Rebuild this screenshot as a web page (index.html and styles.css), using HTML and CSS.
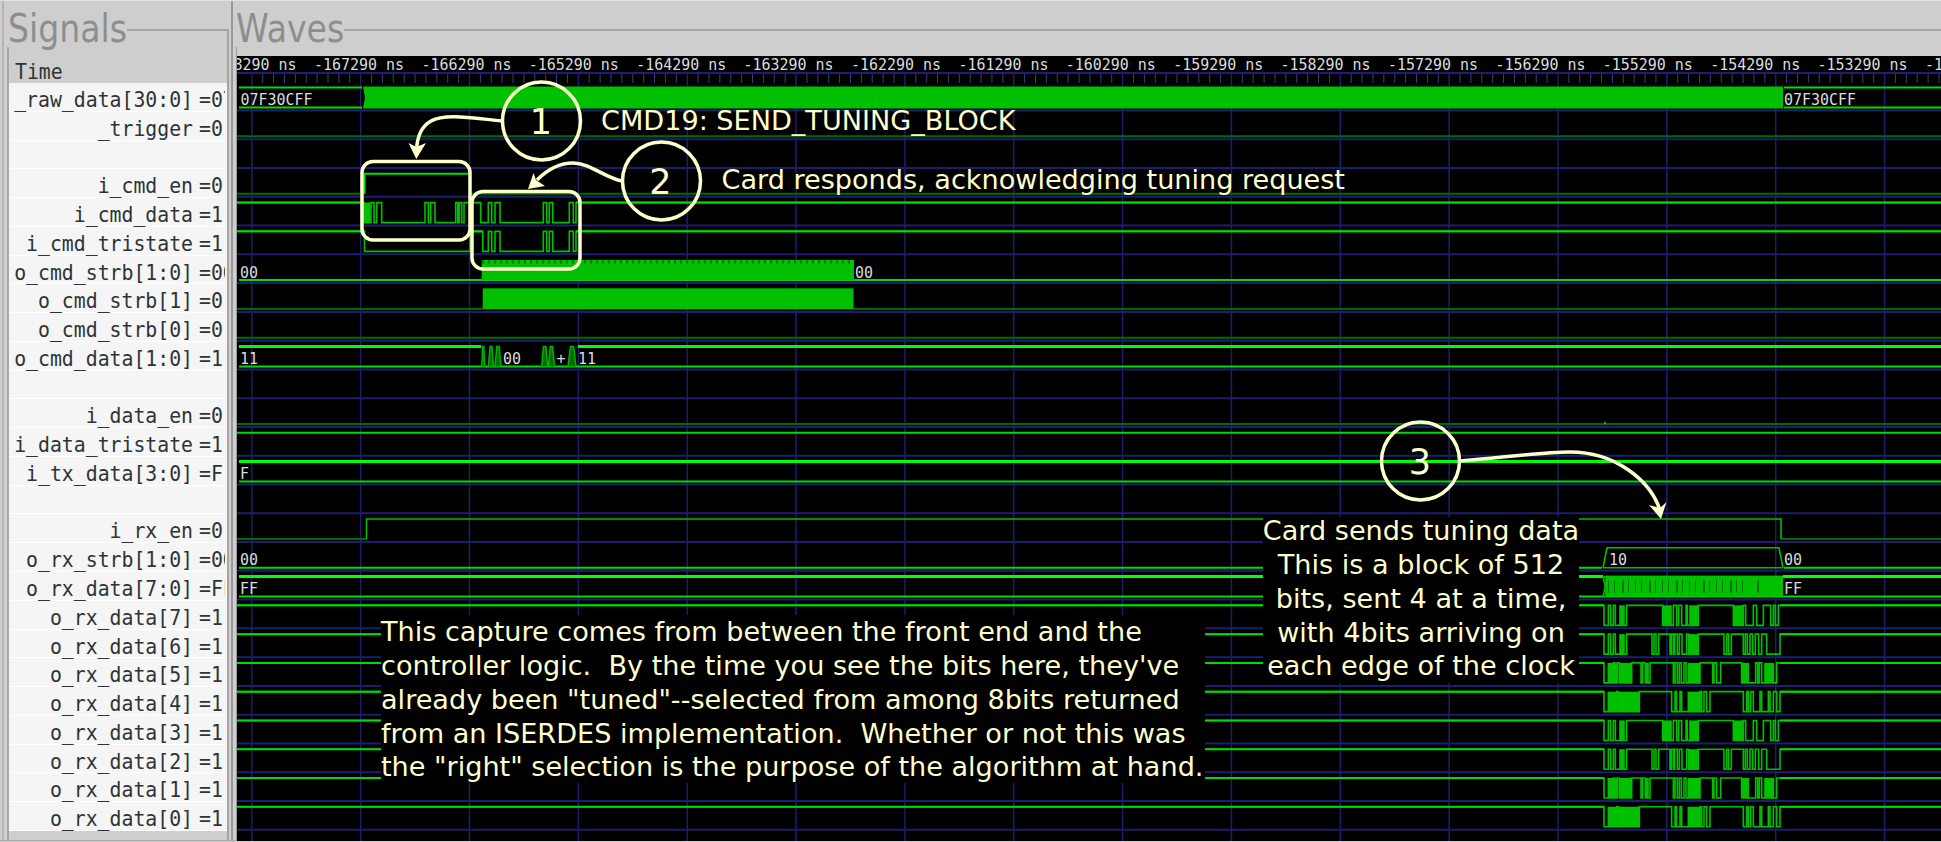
FILE: index.html
```html
<!DOCTYPE html>
<html lang="en">
<head>
    <meta charset="UTF-8">
    <title>Signals and Waves</title>
    <link rel="stylesheet" href="styles.css">
</head>
<body>
    <div class="app">
        <div class="pane pane-signals">
            <div class="frame-head">
                <h2 class="frame-title">Signals</h2>
                <div class="frame-rule"></div>
            </div>
            <div class="frame-body signal-list">
                <div class="time-row"><span class="time-label">Time</span></div>
                <div class="row"><span class="name">_raw_data[30:0]</span><span class="val">=07</span></div>
                <div class="row"><span class="name">_trigger</span><span class="val">=0</span></div>
                <div class="row"></div>
                <div class="row"><span class="name">i_cmd_en</span><span class="val">=0</span></div>
                <div class="row"><span class="name">i_cmd_data</span><span class="val">=1</span></div>
                <div class="row"><span class="name">i_cmd_tristate</span><span class="val">=1</span></div>
                <div class="row"><span class="name">o_cmd_strb[1:0]</span><span class="val">=00</span></div>
                <div class="row"><span class="name">o_cmd_strb[1]</span><span class="val">=0</span></div>
                <div class="row"><span class="name">o_cmd_strb[0]</span><span class="val">=0</span></div>
                <div class="row"><span class="name">o_cmd_data[1:0]</span><span class="val">=11</span></div>
                <div class="row"></div>
                <div class="row"><span class="name">i_data_en</span><span class="val">=0</span></div>
                <div class="row"><span class="name">i_data_tristate</span><span class="val">=1</span></div>
                <div class="row"><span class="name">i_tx_data[3:0]</span><span class="val">=F</span></div>
                <div class="row"></div>
                <div class="row"><span class="name">i_rx_en</span><span class="val">=0</span></div>
                <div class="row"><span class="name">o_rx_strb[1:0]</span><span class="val">=00</span></div>
                <div class="row"><span class="name">o_rx_data[7:0]</span><span class="val">=FF</span></div>
                <div class="row"><span class="name">o_rx_data[7]</span><span class="val">=1</span></div>
                <div class="row"><span class="name">o_rx_data[6]</span><span class="val">=1</span></div>
                <div class="row"><span class="name">o_rx_data[5]</span><span class="val">=1</span></div>
                <div class="row"><span class="name">o_rx_data[4]</span><span class="val">=1</span></div>
                <div class="row"><span class="name">o_rx_data[3]</span><span class="val">=1</span></div>
                <div class="row"><span class="name">o_rx_data[2]</span><span class="val">=1</span></div>
                <div class="row"><span class="name">o_rx_data[1]</span><span class="val">=1</span></div>
                <div class="row"><span class="name">o_rx_data[0]</span><span class="val">=1</span></div>
            </div>
        </div>

        <div class="pane pane-waves">
            <div class="frame-head">
                <h2 class="frame-title">Waves</h2>
                <div class="frame-rule"></div>
            </div>
            <div class="frame-body">
                <svg class="wave-canvas" viewBox="237 56 1704 785" width="1704" height="785">
                    <g id="grid"></g>
                    <g id="traces"></g>

                    <!-- notes drawn over the capture -->
                    <rect class="note-bg" x="381" y="615" width="824" height="168"/>
                    <rect class="note-bg" x="1263" y="517" width="316" height="166"/>

                    <circle class="note-line" cx="541.5" cy="121" r="39"/>
                    <circle class="note-line" cx="661.5" cy="181" r="39"/>
                    <circle class="note-line" cx="1420.5" cy="461" r="39"/>
                    <rect class="note-line" x="362" y="161.5" width="108" height="78.5" rx="11"/>
                    <rect class="note-line" x="472" y="191.5" width="108" height="77.5" rx="11"/>

                    <path class="note-line" d="M502 121 C472 118 445 113 431 121 C420 127 417 140 416.5 150"/>
                    <polygon class="note-fill" points="416.3,159 408.5,143 416.3,147 426,143"/>
                    <path class="note-line" d="M622 181 C605 178 590 163 573 163 C557 163 545 172 537 180"/>
                    <polygon class="note-fill" points="528,189 533.5,173 536,180 545,186"/>
                    <path class="note-line" d="M1460 461 C1500 458 1540 452 1570 452 C1615 452 1650 480 1660 510"/>
                    <polygon class="note-fill" points="1661,519 1649,505 1660,508 1666.5,502"/>

                    <text class="note-num" x="541" y="134">1</text>
                    <text class="note-num" x="660.5" y="194">2</text>
                    <text class="note-num" x="1420" y="474">3</text>

                    <text class="note-text" x="601" y="130">CMD19: SEND_TUNING_BLOCK</text>
                    <text class="note-text" x="721.5" y="189">Card responds, acknowledging tuning request</text>

                    <text class="note-text" x="381" y="641">This capture comes from between the front end and the</text>
                    <text class="note-text" x="381" y="675">controller logic.  By the time you see the bits here, they've</text>
                    <text class="note-text" x="381" y="709">already been "tuned"--selected from among 8bits returned</text>
                    <text class="note-text" x="381" y="743">from an ISERDES implementation.  Whether or not this was</text>
                    <text class="note-text" x="381" y="776">the "right" selection is the purpose of the algorithm at hand.</text>

                    <text class="note-text note-center" x="1421" y="540">Card sends tuning data</text>
                    <text class="note-text note-center" x="1421" y="574">This is a block of 512</text>
                    <text class="note-text note-center" x="1421" y="608">bits, sent 4 at a time,</text>
                    <text class="note-text note-center" x="1421" y="642">with 4bits arriving on</text>
                    <text class="note-text note-center" x="1421" y="675">each edge of the clock</text>
                </svg>
            </div>
        </div>
    </div>

    <script src="waves.js"></script>
</body>
</html>
```

FILE: styles.css
```css
html, body {
    margin: 0;
    height: 100%;
    overflow: hidden;
}
body {
    background-color: #cecece;
    font-family: "DejaVu Sans", sans-serif;
}
.app {
    display: flex;
    height: 841px;
    border-top: 1px solid #e2e2e2;
    border-bottom: 1px solid #a8a8a8;
    box-sizing: border-box;
}
.pane {
    display: flex;
    flex-direction: column;
}
.pane-signals {
    width: 231px;
    box-sizing: border-box;
    margin-left: 2px;
    padding-left: 3px;
    padding-right: 2px;
    border-left: 2px solid #b6b6b6;
    border-right: 2px solid #989898;
}
.pane-waves {
    flex: 1;
    min-width: 0;
    padding-left: 3px;
}
.frame-head {
    display: flex;
    height: 46px;
}
.frame-title {
    margin: 0;
    padding-top: 5px;
    font-size: 39px;
    font-weight: normal;
    line-height: 46px;
    color: #8e8e8e;
    transform: scaleX(0.85);
    transform-origin: left;
}
.pane-signals .frame-title {
    width: 119px;
    margin-left: 1px;
}
.pane-waves .frame-title {
    width: 108px;
}
.frame-rule {
    flex: 1;
    height: 18px;
    margin-top: 28px;
    border-top: 2px solid #a4a4a4;
}
.pane-signals .frame-rule {
    border-right: 2px solid #a4a4a4;
}
.frame-body {
    flex: 1;
    min-height: 0;
    padding-top: 9px;
}
.pane-signals .frame-body {
    padding-top: 6px;
    border-left: 2px solid #a8a8a8;
    border-right: 2px solid #a4a4a4;
}
.pane-waves .frame-body {
    border-left: 1px solid #9a9a9a;
}

/* signal names */
.signal-list {
    background-color: #cecece;
    color: #2e3436;
    font-family: "DejaVu Sans Mono", monospace;
    font-size: 22px;
}
.time-row {
    height: 30px;
    line-height: 38px;
    padding-left: 6px;
}
.time-label {
    display: inline-block;
    transform: scaleX(0.9);
    transform-origin: left;
}
.row {
    display: flex;
    box-sizing: border-box;
    height: 28.77px;
    padding-top: 4px;
    line-height: 26px;
    background-color: #f5f5f5;
    border-bottom: 1.5px solid #ffffff;
}
.name {
    flex: none;
    display: flex;
    justify-content: flex-end;
    width: 184px;
    white-space: nowrap;
    transform: scaleX(0.9);
    transform-origin: right;
}
.val {
    flex: none;
    width: 29px;
    margin-left: 6px;
    overflow: hidden;
    white-space: nowrap;
    transform: scaleX(0.9);
    transform-origin: left;
}

/* wave window */
.wave-canvas {
    display: block;
    background-color: #000000;
}
.grid-line {
    stroke: #1d1d72;
    stroke-width: 1.5;
}
.grid-row {
    stroke: #1d1d72;
    stroke-width: 2;
}
.grid-tick {
    stroke: #3a3a8c;
    stroke-width: 1;
}
.time-text, .bus-text {
    font-family: "DejaVu Sans Mono", monospace;
    font-size: 16.5px;
    fill: #dcdcdc;
}
.trace {
    fill: none;
    stroke-width: 2;
}
.trace-low {
    stroke: #006c00;
}
.trace-high {
    stroke: #00dc00;
}
.trace-edge {
    stroke: #00c000;
    stroke-width: 1.6;
}
.trace-bus {
    stroke: #00ff00;
    stroke-width: 3;
}
.trace-cross {
    fill: #006c00;
    stroke: #00b000;
    stroke-width: 1.5;
}
.trace-solid {
    fill: #00c000;
}
.trace-teeth {
    fill: none;
    stroke: #007400;
    stroke-width: 3;
    stroke-dasharray: 2 4;
}
.trace-fuzz {
    fill: none;
    stroke: #007000;
    stroke-width: 12;
    stroke-dasharray: 1 5 1 7 2 4 1 6;
}
.trace-fuzz-sparse {
    stroke-dasharray: 1 14 2 22;
}

/* notes */
.note-bg {
    fill: #000000;
}
.note-line {
    fill: none;
    stroke: #ffffcc;
    stroke-width: 3.5;
}
.note-fill {
    fill: #ffffcc;
}
.note-num {
    font-size: 35px;
    fill: #ffffcc;
    text-anchor: middle;
}
.note-text {
    font-size: 27.1px;
    fill: #ffffcc;
    white-space: pre;
}
.note-center {
    text-anchor: middle;
}
```

FILE: waves.js
```js
const ROW = 28.77;
const RIGHT = 1941;

function rowBottom(k) { return 110.5 + ROW * k; }
function highY(k) { return rowBottom(k) - 23; }
function lowY(k) { return rowBottom(k) - 3; }

function line(x1, y1, x2, y2, cls) {
    return `<line class="${cls}" x1="${x1}" y1="${y1}" x2="${x2}" y2="${y2}"/>`;
}

function text(x, y, str, width, cls) {
    return `<text class="${cls}" x="${x}" y="${y}" textLength="${width}" lengthAdjust="spacingAndGlyphs">${str}</text>`;
}

function busLabel(k, x, str) {
    return text(x, rowBottom(k) - 5.5, str, str.length * 9, 'bus-text');
}

function constLow(k, from = 237, to = RIGHT) {
    return line(from, lowY(k), to, lowY(k), 'trace trace-low');
}

function constHigh(k, from = 237, to = RIGHT) {
    return line(from, highY(k), to, highY(k), 'trace trace-high');
}

// a bit that idles high and dips low on the given [start, end] spans
function bitRow(k, from, to, lows, fills) {
    const hi = highY(k);
    const lo = lowY(k);
    let d = `M${from} ${hi}`;
    lows.concat(fills).sort((a, b) => a[0] - b[0]).forEach(([a, b]) => {
        d += `H${a}V${lo}H${b}V${hi}`;
    });
    d += `H${to}`;
    let out = '';
    fills.forEach(([a, b]) => {
        out += `<rect class="trace-solid" x="${a}" y="${hi}" width="${b - a}" height="${lo - hi}"/>`;
    });
    return out + `<path class="trace trace-edge" d="${d}"/>` + constHigh(k, from, lows.concat(fills).reduce((m, s) => Math.min(m, s[0]), to));
}

// the rx rows were read off at 3x from x = 1580
function rxSpans(list) {
    return list.map(([a, b]) => [1580 + a / 3, 1580 + b / 3]);
}

function drawGrid() {
    let out = '';
    for (let k = 0; k < 26; k++) {
        out += line(237, rowBottom(k), RIGHT, rowBottom(k), 'grid-row');
    }
    for (let i = 0; i < 17; i++) {
        const x = 251.8 + 108.85 * i;
        out += line(x, 73, x, 841, 'grid-line');
        for (let t = 1; t < 10; t++) {
            const tx = x + 10.885 * t;
            out += line(tx, 73, tx, 83, 'grid-tick');
        }
    }
    out += line(237, 73, RIGHT, 73, 'grid-row');
    for (let i = 0; i < 17; i++) {
        const mid = 251.6 + 107.4 * i;
        out += text(mid - 45, 70, `-${168290 - i * 1000} ns`, 90, 'time-text');
    }
    return out;
}

function drawBusses() {
    let out = '';

    // _raw_data
    out += line(239, highY(0), 362, highY(0), 'trace trace-high');
    out += line(239, lowY(0), 362, lowY(0), 'trace trace-high');
    out += `<path class="trace-solid" d="M363 ${highY(0) - 1}H1783V${lowY(0) + 1}H363L365 ${rowBottom(0) - 13}Z"/>`;
    out += busLabel(0, 240.5, '07F30CFF');
    out += line(1784, highY(0), RIGHT, highY(0), 'trace trace-high');
    out += line(1784, lowY(0), RIGHT, lowY(0), 'trace trace-high');
    out += busLabel(0, 1784, '07F30CFF');

    // o_cmd_strb[1:0]
    out += line(239, lowY(6), RIGHT, lowY(6), 'trace trace-high');
    out += `<rect class="trace-solid" x="481.7" y="260" width="372.3" height="20"/>`;
    out += line(482, 262, 854, 262, 'trace-teeth');
    out += busLabel(6, 240, '00') + busLabel(6, 855, '00');

    // o_cmd_strb[1]
    out += constLow(7, 237, 482.7) + constLow(7, 853.5);
    out += `<rect class="trace-solid" x="482.7" y="288.3" width="370.8" height="21"/>`;

    // o_cmd_data[1:0]
    out += line(239, highY(9), 481, highY(9), 'trace trace-bus');
    out += line(578, highY(9), RIGHT, highY(9), 'trace trace-bus');
    out += line(239, lowY(9), RIGHT, lowY(9), 'trace trace-high');
    [[481.7, 3], [488.5, 5], [495, 6], [541.7, 6], [548.5, 6], [568, 8]].forEach(([x, w]) => {
        const t = highY(9);
        const b = lowY(9);
        out += `<path class="trace-cross" d="M${x} ${b}L${x + w * 0.3} ${t}H${x + w * 0.7}L${x + w} ${b}Z"/>`;
    });
    out += busLabel(9, 240, '11') + busLabel(9, 503, '00') + busLabel(9, 556.5, '+') + busLabel(9, 578, '11');

    // i_tx_data
    out += line(239, highY(13), RIGHT, highY(13), 'trace trace-bus');
    out += line(239, lowY(13), RIGHT, lowY(13), 'trace trace-high');
    out += busLabel(13, 240, 'F');

    // o_rx_strb[1:0]
    out += line(239, lowY(16), 1602, lowY(16), 'trace trace-high');
    out += line(1784, lowY(16), RIGHT, lowY(16), 'trace trace-high');
    out += `<path class="trace trace-edge" d="M1603 ${lowY(16)}L1607 ${highY(16)}H1779L1783 ${lowY(16)}M1603 ${lowY(16)}H1783"/>`;
    out += busLabel(16, 240, '00') + busLabel(16, 1609, '10') + busLabel(16, 1784, '00');

    // o_rx_data[7:0]
    const fuzzY = rowBottom(17) - 13;
    out += line(239, highY(17), 1603, highY(17), 'trace trace-bus');
    out += line(1783, highY(17), RIGHT, highY(17), 'trace trace-bus');
    out += line(239, lowY(17), RIGHT, lowY(17), 'trace trace-high');
    out += `<path class="trace-cross" d="M1603 ${lowY(17)}L1605 ${fuzzY}L1603 ${highY(17)}H1606V${lowY(17)}Z"/>`;
    out += `<rect class="trace-solid" x="1606" y="${highY(17) - 1}" width="177" height="21"/>`;
    out += line(1608, fuzzY, 1740, fuzzY, 'trace-fuzz');
    out += line(1742, fuzzY, 1770, fuzzY, 'trace-fuzz trace-fuzz-sparse');
    out += busLabel(17, 240, 'FF') + busLabel(17, 1784, 'FF');

    return out;
}

function drawBits() {
    let out = '';

    out += constLow(1);

    // i_cmd_en
    out += constLow(3, 237, 364.5) + constLow(3, 470.5);
    out += `<path class="trace trace-high" d="M364.5 ${lowY(3)}V${highY(3)}H470.5"/>`;

    // i_cmd_data and i_cmd_tristate
    const tail = [[480.7, 488.3], [491.7, 495], [500, 543.3], [546.7, 549.3], [552.7, 569.3], [573.3, 576]];
    out += bitRow(4, 237, RIGHT,
        [[369.3, 371], [374, 376.7], [381.7, 425], [428.3, 430.7], [435, 455.7], [457.7, 459.3], [461.7, 464]].concat(tail),
        [[364, 369.3]]);
    tail[0] = [482.7, 488.3];
    out += bitRow(5, 237, RIGHT, [[364.5, 470]].concat(tail), []);
    out += constHigh(5, 470, 482.7) + constHigh(5, 576);
    out += constHigh(4, 576);

    out += constLow(8);
    out += constLow(11);
    out += constHigh(12);

    // i_rx_en
    out += constLow(15, 237, 366.5) + constLow(15, 1781);
    out += `<path class="trace trace-edge" d="M366.5 ${lowY(15)}V${highY(15)}H1781V${lowY(15)}"/>`;
    out += `<rect class="trace-solid" x="1604" y="422" width="2" height="2"/>`;

    // o_rx_data[7..0]: the same four patterns come round twice
    const patterns = [
        {
            lows: [[72, 85], [92, 100], [106, 120], [132, 140], [273, 280], [290, 296], [305, 318], [322, 330],
                [485, 490], [497, 520], [530, 550], [572, 580], [586, 595]],
            fills: [[120, 132], [248, 273], [330, 355], [460, 485]]
        },
        {
            lows: [[72, 85], [92, 100], [106, 120], [132, 140], [216, 222], [228, 236], [270, 274], [280, 284],
                [292, 298], [306, 320], [432, 440], [446, 454], [490, 496], [502, 510], [518, 526], [536, 545], [560, 600]],
            fills: [[120, 132], [326, 355]]
        },
        {
            lows: [[72, 85], [183, 188], [204, 210], [280, 285], [292, 298], [304, 312], [318, 325], [398, 402],
                [410, 422], [505, 527], [533, 538], [545, 555], [580, 590]],
            fills: [[85, 100], [104, 112], [118, 155], [196, 204], [325, 360], [485, 505], [555, 580]]
        },
        {
            lows: [[72, 85], [275, 285], [290, 300], [305, 325], [365, 372], [380, 390], [490, 500], [505, 512],
                [520, 540], [545, 565], [570, 580], [590, 600]],
            fills: [[85, 110], [115, 178], [325, 360]]
        }
    ];
    for (let k = 18; k < 26; k++) {
        const p = patterns[(k - 18) % 4];
        out += bitRow(k, 237, RIGHT, rxSpans(p.lows), rxSpans(p.fills));
        out += constHigh(k, 1780);
    }
    return out;
}

document.getElementById('grid').innerHTML = drawGrid();
document.getElementById('traces').innerHTML = drawBusses() + drawBits();
```
